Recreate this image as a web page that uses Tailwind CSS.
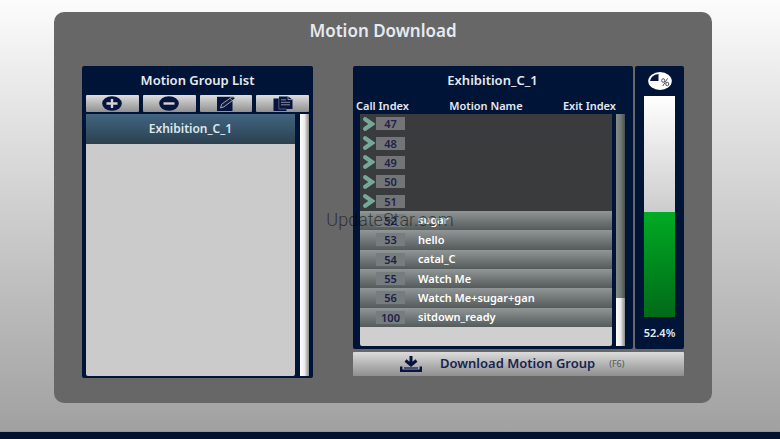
<!DOCTYPE html>
<html lang="en">
  <head>
    <meta charset="UTF-8" />
    <meta name="viewport" content="width=device-width, initial-scale=1.0" />
    <title>Motion Download</title>
    <script src="https://cdn.jsdelivr.net/npm/@tailwindcss/browser@4"></script>
  </head>
  <body class="relative flex min-h-screen flex-col bg-linear-to-b from-[#fcfcfc] to-[#9f9f9f] font-['Noto_Sans','Open_Sans',sans-serif] text-[11px] font-semibold text-[#e6eaf0]">
    <main class="mt-3 mr-[68px] ml-[54px] rounded-[10px] bg-[#676767] px-7 pb-[25px]">
      <h1 class="pt-[7px] pb-[23px] text-center text-[17px] leading-6">Motion Download</h1>

      <div class="grid grid-cols-[231fr_331fr] items-start gap-10">
        <!-- Motion groups -->
        <section class="flex h-[312px] flex-col rounded-xs bg-[#001438] px-1 pb-[2px]">
          <h2 class="h-[29px] text-center text-[13px] leading-7">Motion Group List</h2>
          <div class="grid grid-cols-4 gap-1">
            <button type="button" aria-label="Add group" class="flex h-[17px] items-center justify-center rounded-[1px] bg-linear-to-b from-[#dedede] to-[#919191]">
              <svg class="h-[15px] w-5" viewBox="0 0 20 15">
                <ellipse cx="10" cy="7.5" rx="9.8" ry="7.3" fill="#071440" />
                <path d="M4.5 7.5h11M10 3v9" stroke="#d4d4d4" stroke-width="2.4" />
              </svg>
            </button>
            <button type="button" aria-label="Remove group" class="flex h-[17px] items-center justify-center rounded-[1px] bg-linear-to-b from-[#dedede] to-[#919191]">
              <svg class="h-[15px] w-5" viewBox="0 0 20 15">
                <ellipse cx="10" cy="7.5" rx="9.8" ry="7.3" fill="#071440" />
                <path d="M4.5 7.5h11" stroke="#d4d4d4" stroke-width="2.4" />
              </svg>
            </button>
            <button type="button" aria-label="Rename group" class="flex h-[17px] items-center justify-center rounded-[1px] bg-linear-to-b from-[#dedede] to-[#919191]">
              <svg class="h-[15px] w-5" viewBox="0 0 20 15">
                <path d="M1 .8h15.500V15H1z" fill="#071440" />
                <path d="M4.500 12l1.200-3.800L15.500 1.200q1.800-.9 3 .3.700 1-.6 2L8 10.800z" fill="#141c40" stroke="#b4b4b8" stroke-width=".9" />
                <path d="M14 2.500l2.800 2.200" stroke="#b4b4b8" stroke-width=".7" />
              </svg>
            </button>
            <button type="button" aria-label="Copy group" class="flex h-[17px] items-center justify-center rounded-[1px] bg-linear-to-b from-[#dedede] to-[#919191]">
              <svg class="h-[15px] w-5" viewBox="0 0 20 15">
                <path d="M.5 2.500h6V13h7v2H.5z" fill="#071440" />
                <path d="M6 .5h9l4.500 3v9.500H6z" fill="#071440" />
                <path d="M5.800 2.500V13h7.700" fill="none" stroke="#8a8a92" stroke-width=".6" />
                <path d="M15 .5v3h4.500M8 3.800h5M8 6.300h9M8 8.800h9" fill="none" stroke="#a9a9ad" stroke-width=".8" />
              </svg>
            </button>
          </div>
          <div class="mt-[2px] flex flex-1 gap-[5px]">
            <ul class="flex-1 rounded-xs bg-[#cbcbcb]">
              <li>
                <button type="button" class="h-[30px] w-full bg-linear-to-b from-[#426581] to-[#2b4150] pb-px text-xs text-[#dce8f0]">Exhibition_C_1</button>
              </li>
            </ul>
            <div class="w-[9px] bg-linear-to-r from-white via-[#ececec] to-[#8c8c8c]"></div>
          </div>
        </section>

        <div>
          <div class="flex h-[283px] gap-[2px]">
            <!-- Motions of the selected group -->
            <section class="flex flex-1 flex-col rounded-xs bg-[#001438] pr-2 pb-[3px] pl-[7px]">
              <h2 class="h-[30px] text-center text-[13px] leading-7">Exhibition_C_1</h2>
              <div class="flex flex-1 gap-1">
                <table class="flex flex-1 flex-col">
                  <thead class="-mx-1 block h-[18px] leading-5">
                    <tr class="flex justify-between whitespace-nowrap">
                      <th class="font-semibold">Call Index</th>
                      <th class="font-semibold">Motion Name</th>
                      <th class="font-semibold">Exit Index</th>
                    </tr>
                  </thead>
                  <tbody id="motions" class="grid h-[213px] auto-rows-fr bg-[#3a3b3c]"></tbody>
                  <tfoot class="block flex-1 rounded-b-xs bg-[#cfcfcf]"></tfoot>
                </table>
                <div class="mt-[18px] flex w-[9px] flex-col justify-end bg-linear-to-r from-[#858c88] via-[#737a76] to-[#4a504f]">
                  <div class="h-12 bg-linear-to-r from-white via-[#ececec] to-[#8c8c8c]"></div>
                </div>
              </div>
            </section>

            <!-- Download progress -->
            <section class="flex w-[49px] flex-col items-center rounded-xs bg-[#001438] pt-[6px]">
              <svg class="h-[18px] w-6" viewBox="0 0 24 18">
                <ellipse cx="12" cy="9" rx="11.800" ry="9" fill="#fff" />
                <path d="M10.500 2v7H2Q3 3 10.500 2z" fill="#071440" />
                <g fill="none" stroke="#4b4f60" stroke-width="1">
                  <ellipse cx="15.200" cy="8.500" rx="1.500" ry="1.800" />
                  <ellipse cx="19.300" cy="12" rx="1.500" ry="1.800" />
                  <path d="M19.500 6.500L14.800 14" />
                </g>
              </svg>
              <!-- the green part is what is still to be sent -->
              <div class="mt-[6px] flex h-[221px] w-[31px] flex-col justify-end bg-linear-to-b from-white to-[#a0a0a0]" role="progressbar" aria-label="Download progress" aria-valuenow="52.4" aria-valuemin="0" aria-valuemax="100">
                <div class="bg-linear-to-b from-[#00ab24] to-[#006b18]" style="height: 47.6%"></div>
              </div>
              <span class="mt-2 leading-4">52.4%</span>
            </section>
          </div>

          <button type="button" class="mt-[3px] flex h-6 w-full items-center rounded-[1px] bg-linear-to-b from-[#dcdcdc] to-[#8f8f8f] pl-[47px] text-[13px] text-[#182450]">
            <svg class="h-4 w-[22px]" viewBox="0 0 22 16" fill="none" stroke="#071440">
              <path d="M11 0v9M5.500 4.500L11 9l5.500-4.500" stroke-width="3" />
              <path d="M1.200 10.500v4.200h19.600v-4.200" stroke-width="2.400" />
              <path d="M4 12h14" stroke-width="1.200" />
            </svg>
            <span class="ml-[18px]">Download Motion Group</span>
            <span class="ml-[14px] text-[9px] font-normal text-[#555]">(F6)</span>
          </button>
        </div>
      </div>
    </main>

    <footer class="mt-auto h-2 border-t border-[#8d96a8] bg-[#001230]"></footer>

    <div class="pointer-events-none absolute top-[208px] left-1/2 -translate-x-1/2 font-[Roboto,sans-serif] text-lg leading-6 font-light text-black/55">UpdateStar.com</div>

    <template id="emptyRow">
      <tr class="flex items-center">
        <td class="flex w-4 justify-end pr-px">
          <svg class="h-[14px] w-3" viewBox="0 0 12 14" fill="none" stroke="#75a899" stroke-width="4.200">
            <path d="M2.200 2.200L9 7l-6.800 4.800" stroke-linecap="round" />
          </svg>
        </td>
        <td data-index class="h-[13px] w-[29px] bg-[#737476] text-center leading-[13px] text-[#20224c]"></td>
        <td data-name></td>
      </tr>
    </template>
    <template id="motionRow">
      <tr class="flex items-center bg-linear-to-b from-[#919797] to-[#555a5a]">
        <td class="w-4"></td>
        <td data-index class="h-[13px] w-[29px] bg-[#777c7f] text-center leading-[13px] text-[#1c2048]"></td>
        <td data-name class="pl-[13px] leading-4 text-white"></td>
      </tr>
    </template>

    <script>
      const motions = [
        [47, ""],
        [48, ""],
        [49, ""],
        [50, ""],
        [51, ""],
        [52, "sugar"],
        [53, "hello"],
        [54, "catal_C"],
        [55, "Watch Me"],
        [56, "Watch Me+sugar+gan"],
        [100, "sitdown_ready"],
      ];

      const body = document.getElementById("motions");
      motions.forEach(([index, name]) => {
        const template = document.getElementById(name ? "motionRow" : "emptyRow");
        const row = template.content.cloneNode(true);
        row.querySelector("[data-index]").textContent = index;
        row.querySelector("[data-name]").textContent = name;
        body.appendChild(row);
      });
    </script>
  </body>
</html>
